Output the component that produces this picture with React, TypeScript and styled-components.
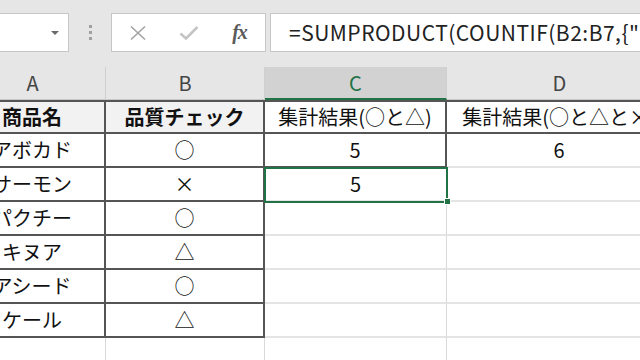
import React from 'react';
import styled, { createGlobalStyle, css } from 'styled-components';

const Global = createGlobalStyle`
  html, body { margin: 0; padding: 0; background: #fff; }
  body { font-family: "Noto Sans CJK JP", "Noto Sans", sans-serif; }
  #root { width: 640px; height: 360px; }
`;

const Screen = styled.div`
  width: 640px;
  height: 360px;
  overflow: hidden;
  background: #fff;
  display: flex;
  flex-direction: column;
`;

const TopBar = styled.div`
  height: 67px;
  flex: none;
  box-sizing: border-box;
  background: #e6e6e6;
  display: flex;
  align-items: flex-start;
  padding-top: 13px;
`;

const NameBox = styled.div`
  flex: none;
  margin-left: -10px;
  width: 79px;
  height: 39px;
  box-sizing: border-box;
  background: #fff;
  border: 1px solid #c6c6c6;
  display: flex;
  align-items: center;
  justify-content: flex-end;
  padding-right: 9px;
`;

const Caret = styled.div`
  width: 0;
  height: 0;
  border-left: 4px solid transparent;
  border-right: 4px solid transparent;
  border-top: 4px solid #6a6a6a;
`;

const Grip = styled.div`
  flex: none;
  width: 42px;
  height: 39px;
  display: flex;
  flex-direction: column;
  align-items: center;
  justify-content: center;
  gap: 3px;
`;

const Dot = styled.span`
  width: 3px;
  height: 3px;
  background: #a0a0a0;
`;

const FxBox = styled.div`
  flex: none;
  width: 155px;
  height: 39px;
  box-sizing: border-box;
  background: #fff;
  border: 1px solid #c6c6c6;
  display: grid;
  grid-template-columns: 51px 51px 51px;
  align-items: center;
  justify-items: center;
`;

const FxLabel = styled.span`
  font-family: "Liberation Serif", "DejaVu Serif", serif;
  font-style: italic;
  font-weight: bold;
  font-size: 20px;
  color: #5a5a5a;
  letter-spacing: -1px;
  line-height: 1;
  margin-top: -2px;
`;

const FormulaInput = styled.div`
  flex: 1;
  margin-left: 4px;
  margin-right: -10px;
  height: 39px;
  box-sizing: border-box;
  background: #fff;
  border: 1px solid #c6c6c6;
  display: flex;
  align-items: center;
  padding-left: 18px;
  overflow: hidden;
  white-space: nowrap;
  font-size: 21px;
  letter-spacing: 0.5px;
  color: #222;
  line-height: 1;
`;

const Sheet = styled.div`
  margin-left: -40px;
  display: grid;
  grid-template-columns: 146px 159px 182px 226px;
  grid-template-rows: 33px repeat(8, 34px);
`;

const ColHead = styled.div<{ $active?: boolean }>`
  box-sizing: border-box;
  background: ${(p) => (p.$active ? '#d2d2d2' : '#e6e6e6')};
  color: ${(p) => (p.$active ? '#217346' : '#444')};
  border-right: 1px solid #cfcfcf;
  border-bottom: ${(p) => (p.$active ? '2px solid #217346' : '1px solid #c8c8c8')};
  display: flex;
  align-items: center;
  justify-content: center;
  font-size: 20px;
  line-height: 1;
`;

type Line = 'dark' | 'light' | 'none';

const lineCss = (l: Line, dir: 'right' | 'bottom' | 'top') => {
  if (l === 'dark') return `border-${dir}: 2px solid #555;`;
  if (l === 'light')
    return dir === 'right' ? `border-${dir}: 1px solid #d9d9d9;` : `border-${dir}: 2px solid #e4e4e4;`;
  return '';
};

const Cell = styled.div<{
  $r: Line;
  $b: Line;
  $t?: boolean;
  $head?: boolean;
  $bold?: boolean;
  $selected?: boolean;
}>`
  box-sizing: border-box;
  position: relative;
  display: flex;
  align-items: center;
  justify-content: center;
  white-space: nowrap;
  overflow: hidden;
  font-size: 20px;
  line-height: 1;
  color: #111;
  background: ${(p) => (p.$head ? '#f2f2f2' : '#fff')};
  font-weight: ${(p) => (p.$bold ? 700 : 400)};
  ${(p) => lineCss(p.$r, 'right')}
  ${(p) => lineCss(p.$b, 'bottom')}
  ${(p) => (p.$t ? 'border-top: 2px solid #555;' : '')}
  ${(p) =>
    p.$selected &&
    css`
      overflow: visible;
      outline: 2px solid #217346;
      outline-offset: -1px;
      z-index: 2;
      &::after {
        content: '';
        position: absolute;
        right: -5px;
        bottom: -5px;
        width: 5px;
        height: 5px;
        background: #217346;
        border: 1px solid #fff;
      }
    `}
`;

type Row = { a: string; b: string; c: string; d: string };

const FORMULA = '=SUMPRODUCT(COUNTIF(B2:B7,{"○","△"}))';

const rows: Row[] = [
  { a: '商品名', b: '品質チェック', c: '集計結果(○と△)', d: '集計結果(○と△と×)' },
  { a: 'アボカド', b: '○', c: '5', d: '6' },
  { a: 'サーモン', b: '×', c: '5', d: '' },
  { a: 'パクチー', b: '○', c: '', d: '' },
  { a: 'キヌア', b: '△', c: '', d: '' },
  { a: 'アシード', b: '○', c: '', d: '' },
  { a: 'ケール', b: '△', c: '', d: '' },
  { a: '', b: '', c: '', d: '' },
];

const CrossIcon = () => (
  <svg width="18" height="16" viewBox="0 0 18 16">
    <path d="M2 1.5 L16 14.5 M16 1.5 L2 14.5" stroke="#a3a3a3" strokeWidth="1.6" fill="none" />
  </svg>
);

const CheckIcon = () => (
  <svg width="20" height="16" viewBox="0 0 20 16">
    <path d="M1.5 8.5 L7 13.5 L18.5 2" stroke="#c4c4c4" strokeWidth="2.6" fill="none" />
  </svg>
);

export default function App() {
  return (
    <>
      <Global />
      <Screen>
        <TopBar>
          <NameBox>
            <Caret />
          </NameBox>
          <Grip>
            <Dot />
            <Dot />
            <Dot />
          </Grip>
          <FxBox>
            <CrossIcon />
            <CheckIcon />
            <FxLabel>fx</FxLabel>
          </FxBox>
          <FormulaInput>{FORMULA}</FormulaInput>
        </TopBar>
        <Sheet>
          <ColHead>A</ColHead>
          <ColHead>B</ColHead>
          <ColHead $active>C</ColHead>
          <ColHead>D</ColHead>
          {rows.map((row, i) => {
            const inAB = i <= 6;
            const isHead = i === 0;
            return (
              <React.Fragment key={i}>
                <Cell $r={inAB ? 'dark' : 'light'} $b={inAB ? 'dark' : 'light'} $t={isHead} $head={isHead} $bold={isHead}>
                  {row.a}
                </Cell>
                <Cell $r={inAB ? 'dark' : 'light'} $b={inAB ? 'dark' : 'light'} $t={isHead} $head={isHead} $bold={isHead}>
                  {row.b}
                </Cell>
                <Cell
                  $r={i <= 1 ? 'dark' : 'light'}
                  $b={i <= 1 ? 'dark' : 'light'}
                  $t={isHead}
                  $selected={i === 2}
                >
                  {row.c}
                </Cell>
                <Cell $r={i <= 1 ? 'dark' : 'light'} $b={i === 0 ? 'dark' : 'light'} $t={isHead}>
                  {row.d}
                </Cell>
              </React.Fragment>
            );
          })}
        </Sheet>
      </Screen>
    </>
  );
}
